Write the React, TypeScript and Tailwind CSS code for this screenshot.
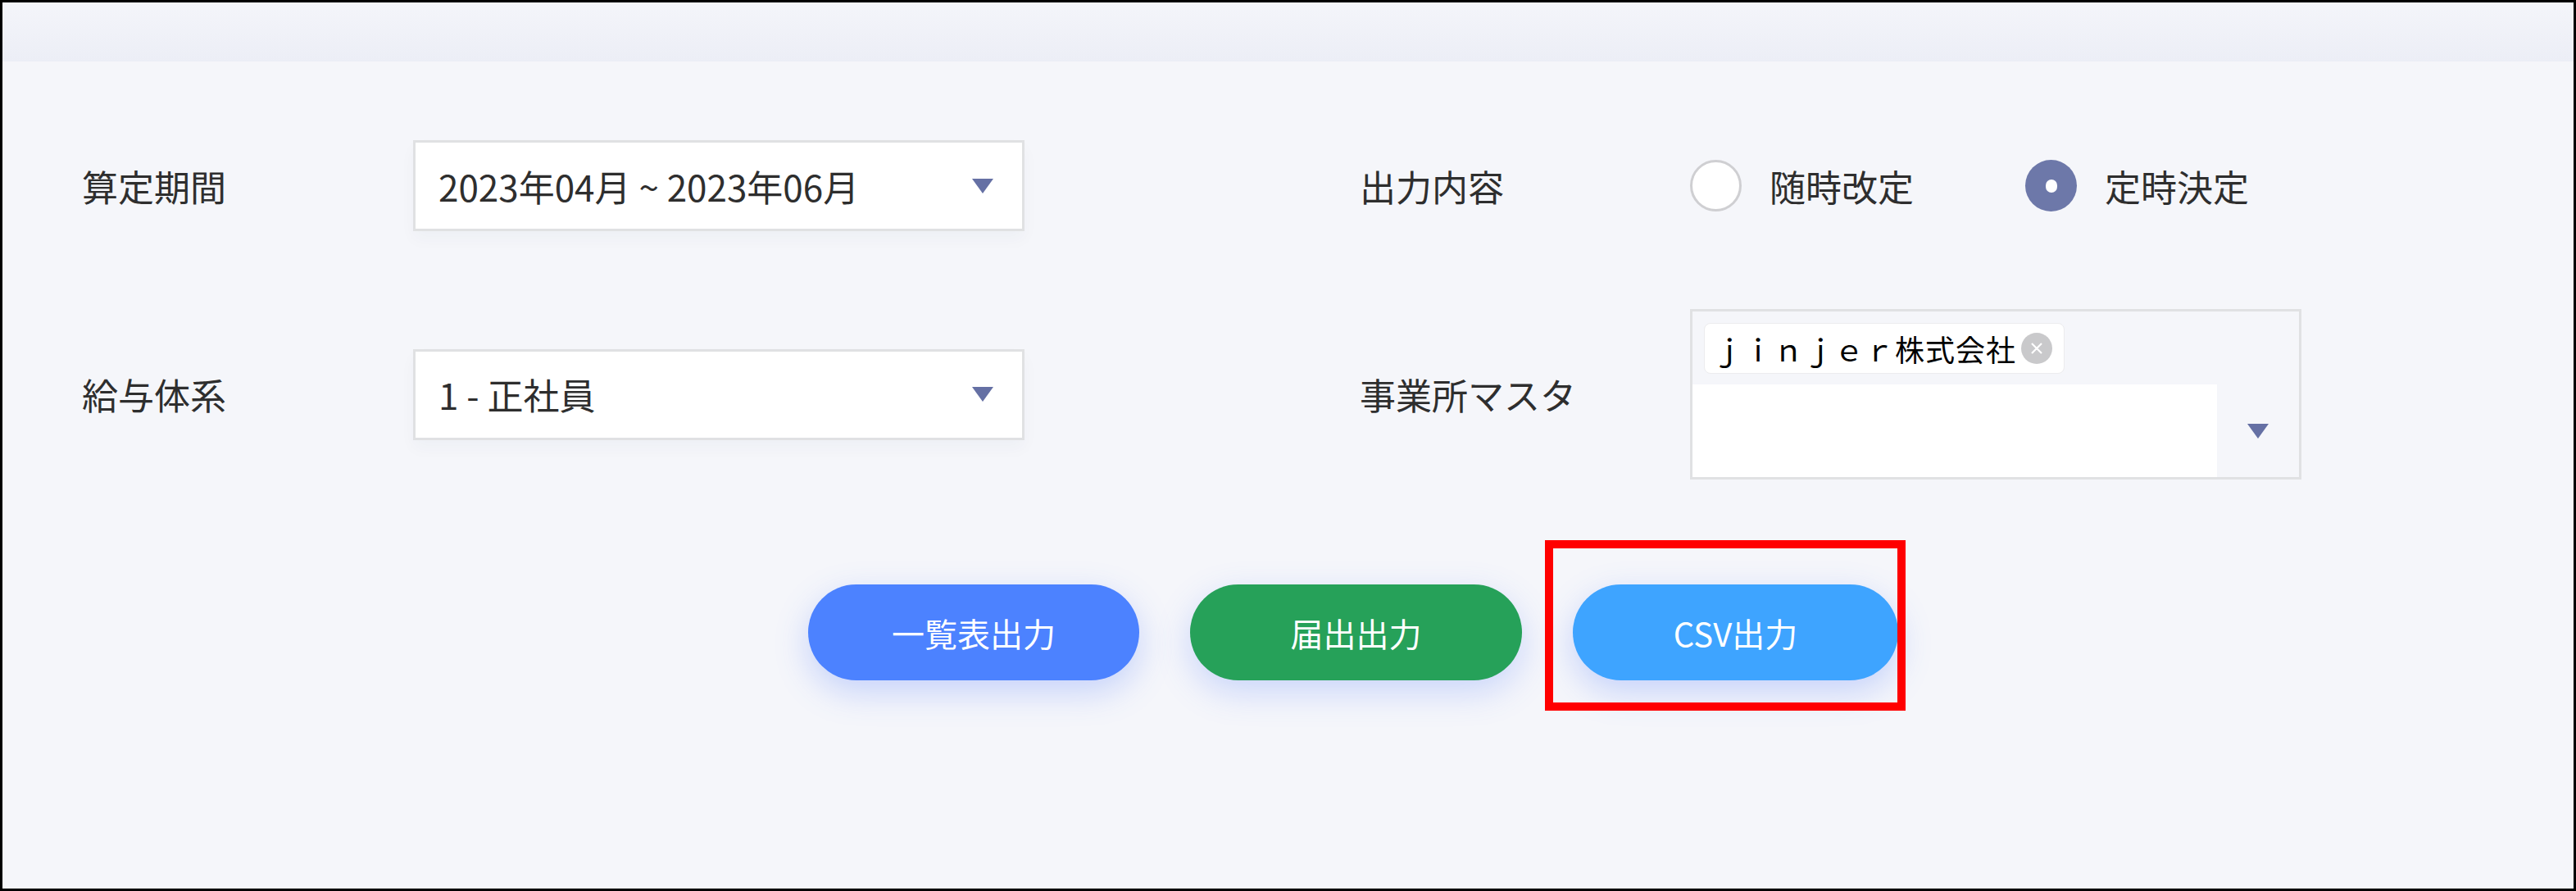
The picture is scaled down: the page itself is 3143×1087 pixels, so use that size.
import React from "react";

const font = "font-['Noto_Sans_CJK_JP',sans-serif]";

function Caret() {
    return (
        <svg width="28" height="20" viewBox="0 0 28 20" className="shrink-0">
            <path d="M1 1 H27 L14 19 Z" fill="#6570a4" />
        </svg>
    );
}

function Select({ value }: { value: string }) {
    return (
        <div className="flex h-[111px] w-[746px] items-center justify-between border-[3px] border-[#e0e1e3] bg-white pl-[28px] pr-[34px] shadow-[0_10px_18px_rgba(40,50,90,0.03)]">
            <span className="text-[44px] leading-none text-[#2e2e2e]">{value}</span>
            <Caret />
        </div>
    );
}

function Radio({ checked, label }: { checked?: boolean; label: string }) {
    return (
        <div className="flex items-center gap-[34px]">
            {checked ? (
                <span className="flex h-[63px] w-[63px] items-center justify-center rounded-full bg-[#6d78a9]">
                    <span className="h-[16px] w-[14px] rounded-full bg-white" />
                </span>
            ) : (
                <span className="h-[63px] w-[63px] rounded-full border-[3px] border-[#cfcfd2] bg-white" />
            )}
            <span className="text-[44px] leading-none text-[#2e2e2e]">{label}</span>
        </div>
    );
}

export default function App() {
    return (
        <div className={`box-border flex h-[1087px] w-[3143px] flex-col border-[3px] border-black bg-[#f5f6fa] ${font}`}>
            {/* header strip */}
            <div className="h-[72px] bg-linear-to-b from-[#f4f5fa] to-[#eceef6]" />

            {/* row 1 */}
            <div className="mt-[96px] flex h-[111px] items-center pl-[97px]">
                <div className="w-[404px] text-[44px] leading-none text-[#2e2e2e]">算定期間</div>
                <Select value="2023年04月 ~ 2023年06月" />
                <div className="w-[409px]" />
                <div className="w-[403px] text-[44px] leading-none text-[#2e2e2e]">出力内容</div>
                <div className="flex items-center gap-[136px]">
                    <Radio label="随時改定" />
                    <Radio checked label="定時決定" />
                </div>
            </div>

            {/* row 2 */}
            <div className="mt-[95px] flex h-[208px] items-center pl-[97px]">
                <div className="w-[404px] text-[44px] leading-none text-[#2e2e2e]">給与体系</div>
                <Select value="1 - 正社員" />
                <div className="w-[409px]" />
                <div className="w-[403px] text-[44px] leading-none text-[#2e2e2e]">事業所マスタ</div>
                <div className="flex h-[208px] w-[746px] flex-col border-[3px] border-[#e0e1e3] bg-[#f5f6fa]">
                    <div className="flex h-[89px] items-start pl-[14px] pt-[14px]">
                        <div className="flex h-[62px] items-center gap-[6px] rounded-[8px] border border-[#ececee] bg-white pl-[10px] pr-[14px]">
                            <span className="text-[36px] leading-none tracking-[1px] text-black">ｊｉｎｊｅｒ株式会社</span>
                            <span className="flex h-[38px] w-[38px] items-center justify-center rounded-full bg-[#c9c9cb]">
                                <svg width="20" height="20" viewBox="0 0 20 20">
                                    <path d="M4 4 L16 16 M16 4 L4 16" stroke="white" strokeWidth="2.2" />
                                </svg>
                            </span>
                        </div>
                    </div>
                    <div className="flex flex-1 items-center">
                        <div className="h-full w-[640px] bg-white" />
                        <div className="flex flex-1 justify-center">
                            <Caret />
                        </div>
                    </div>
                </div>
            </div>

            {/* buttons */}
            <div className="mt-[128px] flex gap-[62px] pl-[983px]">
                <button className="h-[117px] w-[404px] rounded-full bg-[#4c82ff] text-[40px] text-white shadow-[0_14px_40px_rgba(76,120,255,0.28)]">
                    一覧表出力
                </button>
                <button className="h-[117px] w-[405px] rounded-full bg-[#26a159] text-[40px] text-white shadow-[0_14px_40px_rgba(76,120,255,0.25)]">
                    届出出力
                </button>
                <div className="relative">
                    <button className="h-[117px] w-[397px] rounded-full bg-[#3ea4ff] text-[40px] text-white shadow-[0_14px_40px_rgba(76,120,255,0.28)]">
                        CSV出力
                    </button>
                    <div className="absolute -bottom-[37px] -left-[34px] -right-[9px] -top-[54px] border-[10px] border-[#ff0000]" />
                </div>
            </div>
        </div>
    );
}
